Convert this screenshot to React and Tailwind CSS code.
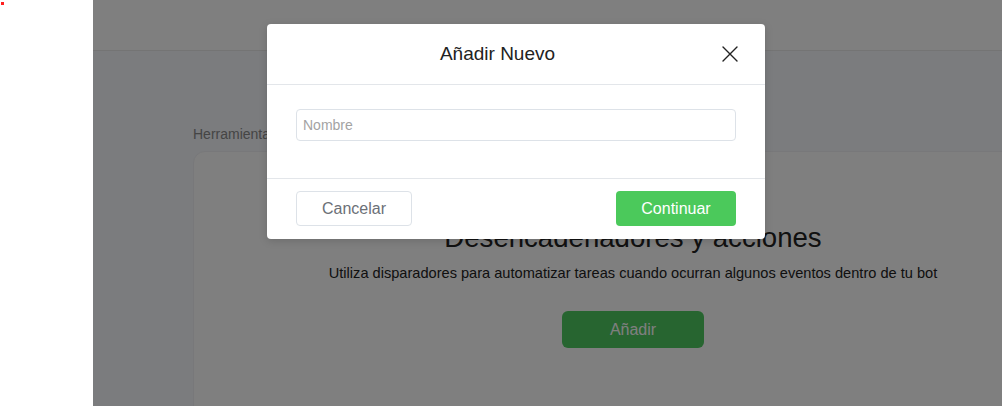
import React, { useState } from 'react';

function CloseIcon() {
  return (
    <svg width="16" height="16" viewBox="0 0 16 16" fill="none" stroke="#222" strokeWidth="1.4" strokeLinecap="round">
      <path d="M1 1 L15 15 M15 1 L1 15" />
    </svg>
  );
}

export default function App() {
  const [name, setName] = useState('');

  return (
    <div className="relative w-[1002px] h-[406px] overflow-hidden flex bg-white font-['Liberation_Sans',Arial,sans-serif]">
      <aside className="w-[93px] shrink-0 bg-white relative">
        <span className="absolute left-[1px] top-[2px] w-[3px] h-[3px] bg-[#ff2020]" />
      </aside>

      <div className="relative flex-1 min-w-0 flex flex-col bg-[#f6f8fc]">
        <header className="h-[51px] shrink-0 bg-white border-b border-[#e8e8e8]" />

        <main className="flex-1 pl-[100px] pt-[73px]">
          <p className="text-[14px] leading-[20px] text-[#8a8a8a]">Herramientas</p>
          <section className="mt-[7px] w-[880px] h-[300px] bg-white border border-[#f0f1f4] rounded-[12px] pt-[69px] flex flex-col items-center">
            <h2 className="text-[27.6px] leading-[34px] text-[#222]">Desencadenadores y acciones</h2>
            <p className="mt-[8px] text-[14.6px] leading-[20px] text-[#222]">
              Utiliza disparadores para automatizar tareas cuando ocurran algunos eventos dentro de tu bot
            </p>
            <button className="mt-[28px] w-[142px] h-[37px] rounded-[6px] bg-[#4eca60] text-white text-[16px]">
              Añadir
            </button>
          </section>
        </main>

        <div className="absolute inset-0 bg-black/50" />
      </div>

      <div className="absolute left-[267px] top-[24px] w-[498px] bg-white rounded-[4px] shadow-[0_2px_8px_rgba(0,0,0,0.15)]">
        <div className="h-[61px] flex items-center pl-[6px] pr-[27px] border-b border-[#e3e6ea]">
          <h3 className="flex-1 text-center text-[19px] text-[#222]">Añadir Nuevo</h3>
          <button className="w-[16px] h-[16px] flex items-center justify-center" aria-label="Cerrar">
            <CloseIcon />
          </button>
        </div>
        <div className="px-[29px] pt-[24px] pb-[37px] border-b border-[#e3e6ea]">
          <input
            value={name}
            onChange={e => setName(e.target.value)}
            placeholder="Nombre"
            className="w-full h-[32px] px-[6px] border border-[#dde2e8] rounded-[4px] text-[14px] text-[#333] placeholder:text-[#a3a3a3] outline-none"
          />
        </div>
        <div className="px-[29px] pt-[12px] pb-[13px] flex items-center justify-between">
          <button className="w-[116px] h-[35px] border border-[#dde2e8] rounded-[4px] text-[16px] text-[#6c7077] bg-white">
            Cancelar
          </button>
          <button className="w-[120px] h-[35px] rounded-[4px] text-[16px] text-white bg-[#4bc95b]">
            Continuar
          </button>
        </div>
      </div>
    </div>
  );
}
